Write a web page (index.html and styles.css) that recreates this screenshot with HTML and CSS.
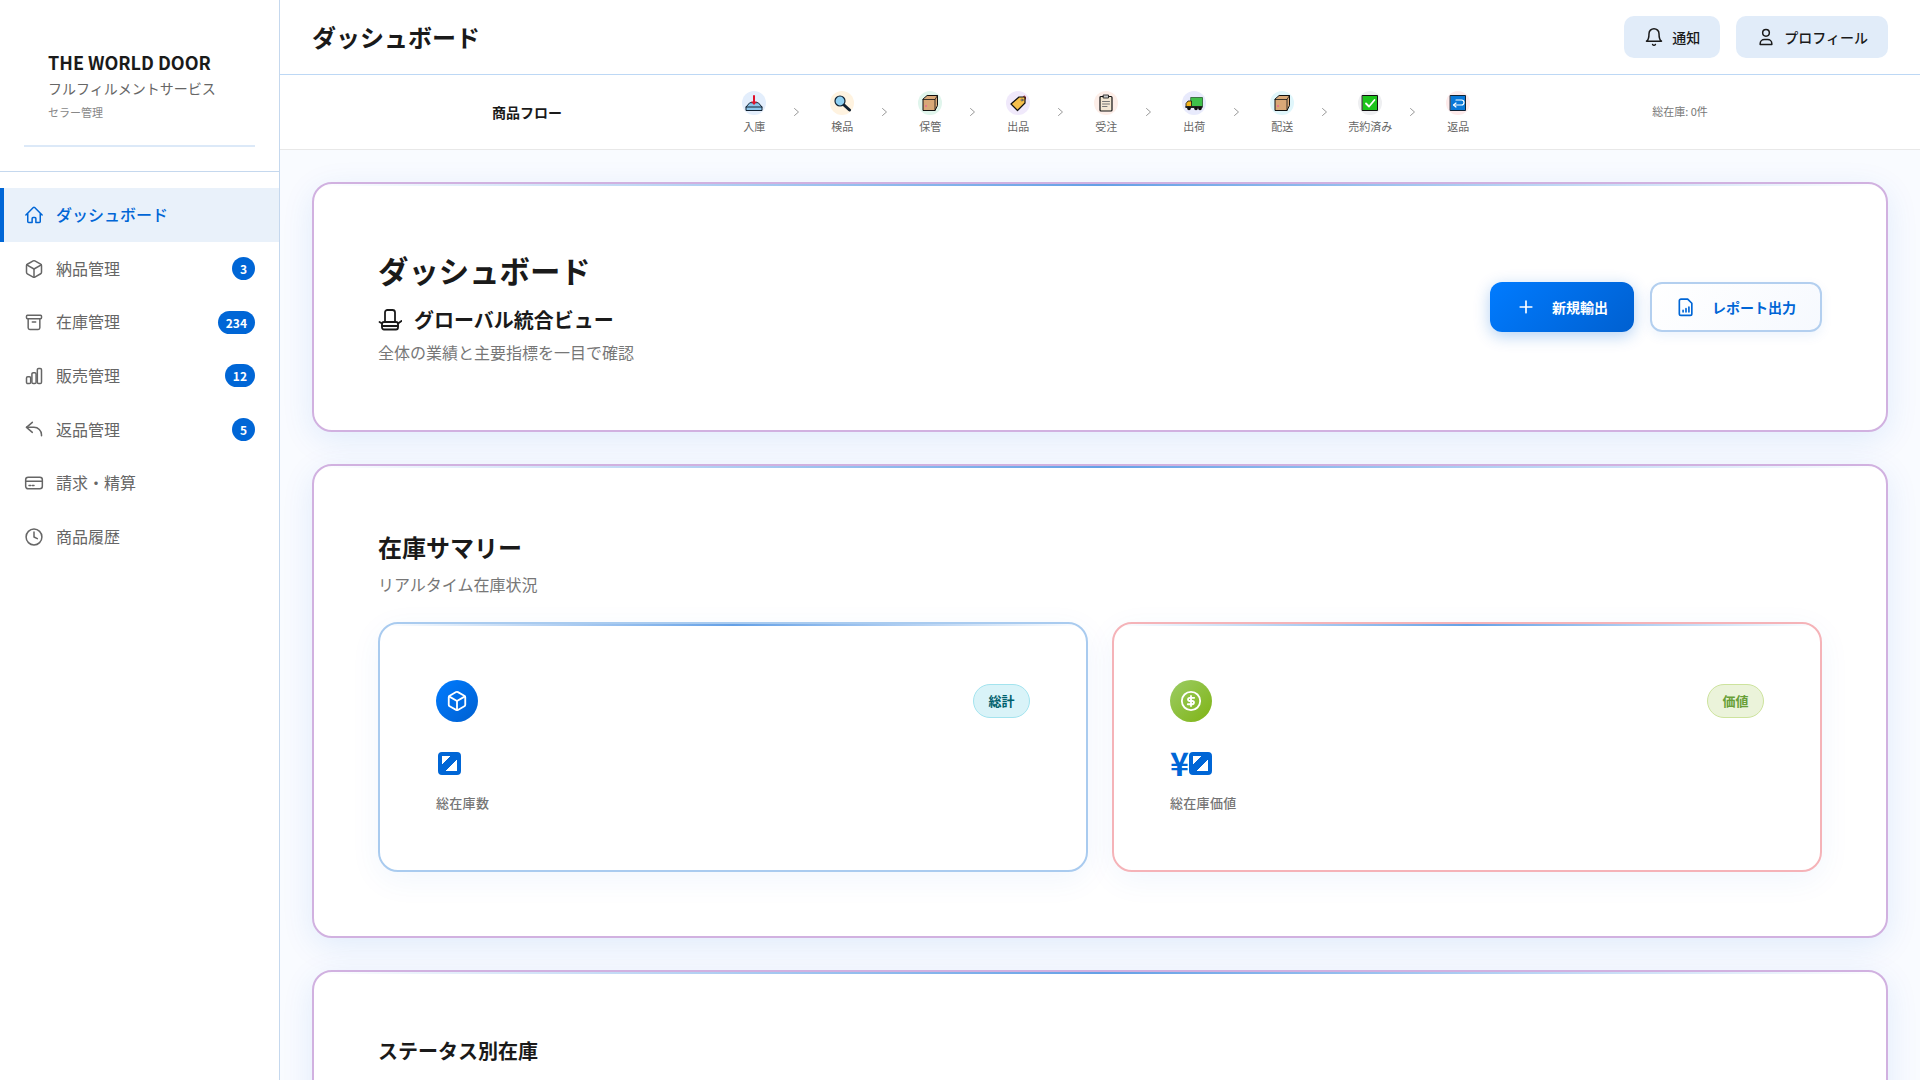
FILE: index.html
```html
<!DOCTYPE html>
<html lang="ja">
<head>
    <meta charset="UTF-8">
    <title>ダッシュボード - THE WORLD DOOR</title>
    <link rel="stylesheet" href="styles.css">
</head>
<body>
    <div class="layout">
        <aside class="sidebar">
            <div class="brand">
                <div class="brand-text">
                    <div class="brand-name">THE WORLD DOOR</div>
                    <div class="brand-sub">フルフィルメントサービス</div>
                    <div class="brand-role">セラー管理</div>
                </div>
            </div>
            <nav class="nav">
                <a class="nav-item active">
                    <svg class="nav-icon" viewBox="0 0 24 24"><path d="M2.25 12l8.954-8.955a1.126 1.126 0 011.591 0L21.75 12M4.5 9.75v10.125c0 .621.504 1.125 1.125 1.125H9.75v-4.875c0-.621.504-1.125 1.125-1.125h2.25c.621 0 1.125.504 1.125 1.125V21h4.125c.621 0 1.125-.504 1.125-1.125V9.75"/></svg>
                    <span class="nav-label">ダッシュボード</span>
                </a>
                <a class="nav-item">
                    <svg class="nav-icon" viewBox="0 0 24 24"><path d="M21 8a2 2 0 0 0-1-1.73l-7-4a2 2 0 0 0-2 0l-7 4A2 2 0 0 0 3 8v8a2 2 0 0 0 1 1.73l7 4a2 2 0 0 0 2 0l7-4A2 2 0 0 0 21 16Z"/><path d="m3.3 7 8.7 5 8.7-5"/><path d="M12 22V12"/></svg>
                    <span class="nav-label">納品管理</span>
                    <span class="nav-badge">3</span>
                </a>
                <a class="nav-item">
                    <svg class="nav-icon" viewBox="0 0 24 24"><rect x="3" y="4" width="18" height="4" rx="1"/><path d="M5 8v11a2 2 0 0 0 2 2h10a2 2 0 0 0 2-2V8"/><path d="M10 12h4"/></svg>
                    <span class="nav-label">在庫管理</span>
                    <span class="nav-badge">234</span>
                </a>
                <a class="nav-item">
                    <svg class="nav-icon" viewBox="0 0 24 24"><rect x="3" y="13" width="5" height="8" rx="1.5"/><rect x="9.5" y="8" width="5" height="13" rx="1.5"/><rect x="16" y="3" width="5" height="18" rx="1.5"/></svg>
                    <span class="nav-label">販売管理</span>
                    <span class="nav-badge">12</span>
                </a>
                <a class="nav-item">
                    <svg class="nav-icon" viewBox="0 0 24 24"><path d="M10 4l-7 6 7 6"/><path d="M3 10h9a9 9 0 0 1 9 9v1"/></svg>
                    <span class="nav-label">返品管理</span>
                    <span class="nav-badge">5</span>
                </a>
                <a class="nav-item">
                    <svg class="nav-icon" viewBox="0 0 24 24"><rect x="2" y="5" width="20" height="14" rx="3"/><path d="M2 10h20"/><path d="M6 15h2M10 15h2"/></svg>
                    <span class="nav-label">請求・精算</span>
                </a>
                <a class="nav-item">
                    <svg class="nav-icon" viewBox="0 0 24 24"><circle cx="12" cy="12" r="9.5"/><path d="M12 6v6l4 2"/></svg>
                    <span class="nav-label">商品履歴</span>
                </a>
            </nav>
        </aside>

        <div class="content">
            <header class="topbar">
                <h1 class="topbar-title">ダッシュボード</h1>
                <div class="topbar-actions">
                    <button class="top-btn">
                        <svg class="top-icon" viewBox="0 0 24 24"><path d="M6 8a6 6 0 0 1 12 0c0 7 3 9 3 9H3s3-2 3-9"/><path d="M10.3 21a1.94 1.94 0 0 0 3.4 0"/></svg>
                        通知
                    </button>
                    <button class="top-btn">
                        <svg class="top-icon" viewBox="0 0 24 24"><circle cx="12" cy="7" r="4"/><path d="M5 20a5 5 0 0 1 5-5h4a5 5 0 0 1 5 5v1H5z"/></svg>
                        プロフィール
                    </button>
                </div>
            </header>

            <div class="flow-bar">
                <div class="flow-title">商品フロー</div>
                <div class="flow-steps">
                    <div class="flow-step">
                        <span class="flow-icon c1"><svg viewBox="0 0 18 18"><path d="M4.500 9 1 13v3.500h16V13l-3.500-4z" fill="#8cc4ea" stroke="#123"/><path d="M1 13h16" stroke="#123"/><path d="M9 2v7" stroke="#e0102a" stroke-width="2"/><path d="M6 7.500 9 11l3-3.500z" fill="#e0102a" stroke="none"/></svg></span>
                        <span class="flow-label">入庫</span>
                    </div>
                    <svg class="flow-arrow" viewBox="0 0 5 8"><path d="M.5.5 4.500 4 .5 7.500"/></svg>
                    <div class="flow-step">
                        <span class="flow-icon c2"><svg viewBox="0 0 18 18"><path d="M11 11l5.500 5" stroke="#123" stroke-width="3"/><circle cx="7" cy="7" r="5" fill="#8fd0f2" stroke="#123" stroke-width="1.200"/></svg></span>
                        <span class="flow-label">検品</span>
                    </div>
                    <svg class="flow-arrow" viewBox="0 0 5 8"><path d="M.5.5 4.500 4 .5 7.500"/></svg>
                    <div class="flow-step">
                        <span class="flow-icon c3"><svg viewBox="0 0 18 18"><path d="M6.500 1.500h10v10L14 16.500H2V5.500z" fill="#d9a877" stroke="#111"/><path d="M2 5.500h12v11M14 5.500l2.500-4" fill="none" stroke="#111" stroke-width=".8"/><path d="M4 11h2v2H4z" fill="#e8788a" stroke="none"/></svg></span>
                        <span class="flow-label">保管</span>
                    </div>
                    <svg class="flow-arrow" viewBox="0 0 5 8"><path d="M.5.5 4.500 4 .5 7.500"/></svg>
                    <div class="flow-step">
                        <span class="flow-icon c4"><svg viewBox="0 0 18 18"><path d="M14 3c1-2 3-1 2.500 2" stroke="#c01828"/><path d="M10 3h6v6l-7.500 7.500L2 10z" fill="#f6c04c" stroke="#111" stroke-width="1.200"/><circle cx="13" cy="6" r="1" fill="#fff" stroke="#111" stroke-width=".6"/></svg></span>
                        <span class="flow-label">出品</span>
                    </div>
                    <svg class="flow-arrow" viewBox="0 0 5 8"><path d="M.5.5 4.500 4 .5 7.500"/></svg>
                    <div class="flow-step">
                        <span class="flow-icon c5"><svg viewBox="0 0 18 18"><rect x="3" y="2.500" width="12" height="14.500" rx="1" fill="#f3e7d3" stroke="#111" stroke-width="1.200"/><rect x="6.500" y="1" width="5" height="3" fill="#c9c9c9" stroke="#111" stroke-width=".8"/><path d="M5.500 7.500h7M5.500 10h7M5.500 12.500h4.500" stroke="#777"/></svg></span>
                        <span class="flow-label">受注</span>
                    </div>
                    <svg class="flow-arrow" viewBox="0 0 5 8"><path d="M.5.5 4.500 4 .5 7.500"/></svg>
                    <div class="flow-step">
                        <span class="flow-icon c6"><svg viewBox="0 0 18 18"><rect x="6" y="3.500" width="11.500" height="9" fill="#3fc04a" stroke="#1a4a1e" stroke-width=".7"/><path d="M1 13V9.500L3 7h3.500v6z" fill="#f2b51e" stroke="#111" stroke-width=".8"/><rect x=".5" y="12" width="17" height="2" fill="#222" stroke="none"/><circle cx="4" cy="14.500" r="1.800" fill="#111" stroke="none"/><circle cx="11" cy="14.500" r="1.800" fill="#111" stroke="none"/><circle cx="15" cy="14.500" r="1.800" fill="#111" stroke="none"/></svg></span>
                        <span class="flow-label">出荷</span>
                    </div>
                    <svg class="flow-arrow" viewBox="0 0 5 8"><path d="M.5.5 4.500 4 .5 7.500"/></svg>
                    <div class="flow-step">
                        <span class="flow-icon c7"><svg viewBox="0 0 18 18"><path d="M6.500 1.500h10v10L14 16.500H2V5.500z" fill="#d9a877" stroke="#111"/><path d="M2 5.500h12v11M14 5.500l2.500-4" fill="none" stroke="#111" stroke-width=".8"/><path d="M4 11h2v2H4z" fill="#e8788a" stroke="none"/></svg></span>
                        <span class="flow-label">配送</span>
                    </div>
                    <svg class="flow-arrow" viewBox="0 0 5 8"><path d="M.5.5 4.500 4 .5 7.500"/></svg>
                    <div class="flow-step">
                        <span class="flow-icon c8"><svg viewBox="0 0 18 18"><rect x="1.500" y="1.500" width="15" height="15" fill="#1cc41c" stroke="#111"/><path d="M5 9.500 8 12.500 13.500 6" stroke="#fff" stroke-width="1.800"/></svg></span>
                        <span class="flow-label">売約済み</span>
                    </div>
                    <svg class="flow-arrow" viewBox="0 0 5 8"><path d="M.5.5 4.500 4 .5 7.500"/></svg>
                    <div class="flow-step">
                        <span class="flow-icon c9"><svg viewBox="0 0 18 18"><rect x="1.500" y="1.500" width="15" height="15" fill="#0a78d8" stroke="#123"/><path d="M7 6h5.500a2.500 2.500 0 0 1 0 5H5" stroke="#fff" stroke-width="1.200"/><path d="M7 9 4.500 11 7 13" stroke="#fff" stroke-width="1.200"/></svg></span>
                        <span class="flow-label">返品</span>
                    </div>
                </div>
                <div class="flow-total">総在庫: 0件</div>
            </div>

            <main class="main">
                <section class="card hero">
                    <div>
                        <h2 class="hero-title">ダッシュボード</h2>
                        <div class="hero-sub">
                            <svg class="hero-icon" viewBox="0 0 24 24"><path d="M7 14V4.500A2.500 2.500 0 0 1 9.500 2h5A2.500 2.500 0 0 1 17 4.500V14"/><rect x="4" y="14" width="16" height="7.500" rx="2"/><path d="M20 15.500l3.500-2.500"/><path d="M4 15.500 1.500 14"/><path d="M4 18h16"/></svg>
                            グローバル統合ビュー
                        </div>
                        <p class="hero-desc">全体の業績と主要指標を一目で確認</p>
                    </div>
                    <div class="hero-actions">
                        <button class="btn btn-primary">
                            <svg class="btn-icon" viewBox="0 0 24 24"><path d="M12 5v14M5 12h14"/></svg>
                            新規輸出
                        </button>
                        <button class="btn btn-outline">
                            <svg class="btn-icon" viewBox="0 0 24 24"><path d="M6 2.500h8l5 5V20a2 2 0 0 1-2 2H6a2 2 0 0 1-2-2V4.500a2 2 0 0 1 2-2z"/><path d="M8.500 18v-2M12 18v-4M15.500 18v-6"/></svg>
                            レポート出力
                        </button>
                    </div>
                </section>

                <section class="card">
                    <h2 class="section-title">在庫サマリー</h2>
                    <p class="section-sub">リアルタイム在庫状況</p>
                    <div class="stat-grid">
                        <div class="stat-card stat-blue">
                            <div class="stat-head">
                                <span class="stat-icon icon-blue">
                                    <svg viewBox="0 0 24 24"><path d="M21 8a2 2 0 0 0-1-1.730l-7-4a2 2 0 0 0-2 0l-7 4A2 2 0 0 0 3 8v8a2 2 0 0 0 1 1.730l7 4a2 2 0 0 0 2 0l7-4A2 2 0 0 0 21 16Z"/><path d="m3.300 7 8.700 5 8.700-5"/><path d="M12 22V12"/></svg>
                                </span>
                                <span class="stat-tag tag-teal">総計</span>
                            </div>
                            <div class="stat-value"><span class="zero-mark"></span></div>
                            <div class="stat-label">総在庫数</div>
                        </div>
                        <div class="stat-card stat-pink">
                            <div class="stat-head">
                                <span class="stat-icon icon-green">
                                    <svg viewBox="0 0 24 24"><circle cx="12" cy="12" r="10"/><path d="M15.500 8.500h-5a1.750 1.750 0 0 0 0 3.500h3a1.750 1.750 0 0 1 0 3.500h-5"/><path d="M12 6.500v11"/></svg>
                                </span>
                                <span class="stat-tag tag-green">価値</span>
                            </div>
                            <div class="stat-value">¥<span class="zero-mark"></span></div>
                            <div class="stat-label">総在庫価値</div>
                        </div>
                    </div>
                </section>

                <section class="card">
                    <h2 class="section-title small">ステータス別在庫</h2>
                </section>
            </main>
        </div>
    </div>
</body>
</html>
```

FILE: styles.css
```css
* {
    box-sizing: border-box;
}
html, body {
    height: 100%;
}
body {
    margin: 0;
    overflow: hidden;
    font-family: "Noto Sans CJK JP", "Noto Sans", sans-serif;
    font-size: 14px;
    line-height: 1.6;
    color: #1a1a1a;
    background: #fff;
}
h1, h2, p {
    margin: 0;
}
svg {
    fill: none;
    stroke: currentColor;
    stroke-width: 2;
    stroke-linecap: round;
    stroke-linejoin: round;
    flex-shrink: 0;
}
.layout {
    display: flex;
    height: 100vh;
}

/* sidebar */
.sidebar {
    width: 280px;
    flex-shrink: 0;
    background: #fff;
    border-right: 1px solid #c5d8ee;
}
.brand {
    padding: 0 24px 24px;
    border-bottom: 1px solid #c5d8ee;
}
.brand-text {
    padding: 47px 24px 24px;
    border-bottom: 2px solid #dce9f8;
}
.brand-name {
    font-size: 18px;
    font-weight: 700;
    line-height: 1.7;
    color: #1a1a1a;
}
.brand-sub {
    font-size: 14px;
    color: #666;
    line-height: 1.5;
}
.brand-role {
    font-size: 11px;
    color: #888;
    line-height: 1.6;
    margin-top: 5px;
}
.nav {
    padding-top: 16px;
}
.nav-item {
    display: flex;
    align-items: center;
    gap: 12px;
    padding: 14px 24px;
    font-size: 16px;
    color: #666;
    border-left: 4px solid transparent;
    padding-left: 20px;
}
.nav-item.active {
    color: #0066d6;
    font-weight: 500;
    background: #e9f1fa;
    border-left-color: #0066d6;
}
.nav-icon {
    width: 20px;
    height: 20px;
    stroke-width: 1.8;
}
.nav-label {
    flex: 1;
}
.nav-badge {
    padding: 0 8px;
    min-width: 23px;
    height: 23px;
    line-height: 23px;
    text-align: center;
    font-size: 12px;
    font-weight: 700;
    color: #fff;
    background: #0066d6;
    border-radius: 12px;
}

/* top */
.content {
    flex: 1;
    min-width: 0;
    display: flex;
    flex-direction: column;
}
.topbar {
    display: flex;
    align-items: center;
    justify-content: space-between;
    height: 75px;
    padding: 0 32px;
    background: #fff;
    border-bottom: 1px solid #bdd8f5;
}
.topbar-title {
    font-size: 24px;
    font-weight: 700;
}
.topbar-actions {
    display: flex;
    gap: 16px;
}
.top-btn {
    display: flex;
    align-items: center;
    gap: 8px;
    padding: 10px 20px;
    font: inherit;
    font-size: 14px;
    font-weight: 500;
    color: #1a1a1a;
    background: #e1ecf9;
    border: none;
    border-radius: 10px;
}
.top-icon {
    width: 20px;
    height: 20px;
    stroke-width: 1.8;
}
.flow-bar {
    display: flex;
    align-items: center;
    justify-content: space-evenly;
    height: 75px;
    padding: 0 32px;
    background: #fff;
    border-bottom: 1px solid #e8e8e8;
}
.flow-title {
    font-size: 14px;
    font-weight: 700;
}
.flow-steps {
    display: flex;
    align-items: center;
    margin: 0 1px 0 -1px;
}
.flow-step {
    width: 26px;
    padding-top: 2px;
    display: flex;
    flex-direction: column;
    align-items: center;
    gap: 3px;
}
.flow-icon {
    width: 24px;
    height: 24px;
    display: flex;
    align-items: center;
    justify-content: center;
    border-radius: 50%;
}
.flow-icon svg {
    width: 18px;
    height: 18px;
    stroke-width: 1;
    color: #111;
}
.c1 { background: #e3eefc; }
.c2 { background: #fff3e0; }
.c3 { background: #e0f5ec; }
.c4 { background: #f0e9fb; }
.c5 { background: #fdeee8; }
.c6 { background: #e8eafc; }
.c7 { background: #e0f6fb; }
.c8 { background: #eeeff1; }
.c9 { background: #fdeaea; }
.flow-label {
    font-size: 11px;
    color: #666;
    white-space: nowrap;
}
.flow-arrow {
    width: 5px;
    height: 8px;
    margin: 0 30px 0 27px;
    color: #999;
    stroke-width: 1;
}
.flow-total {
    font-size: 11px;
    color: #777;
}

/* main area */
.main {
    flex: 1;
    min-height: 0;
    overflow: hidden;
    padding: 32px;
    background: #f9fbff;
}
.card {
    position: relative;
    overflow: hidden;
    padding: 64px;
    margin-bottom: 32px;
    background: #fff;
    border: 2px solid #d1b1e0;
    border-radius: 20px;
    box-shadow: 0 8px 32px rgba(0, 102, 214, 0.1);
}
.card::before {
    content: "";
    position: absolute;
    top: 0;
    left: 0;
    right: 0;
    height: 2px;
    background: linear-gradient(90deg, transparent, #64a0e6, transparent);
}
.hero {
    display: flex;
    align-items: center;
    justify-content: space-between;
}
.hero-title {
    font-size: 30.4px;
    line-height: 44px;
    font-weight: 700;
    margin-bottom: 12px;
}
.hero-sub {
    display: flex;
    align-items: center;
    gap: 12px;
    font-size: 20px;
    font-weight: 700;
    margin-bottom: 4px;
}
.hero-icon {
    width: 24px;
    height: 24px;
    stroke-width: 1.8;
}
.hero-desc {
    font-size: 16px;
    color: #777;
}
.hero-actions {
    display: flex;
    gap: 16px;
}
.btn {
    display: flex;
    align-items: center;
    gap: 16px;
    padding: 12px 24px;
    font: inherit;
    font-size: 14px;
    font-weight: 700;
    border: 2px solid transparent;
    border-radius: 12px;
}
.btn-primary {
    color: #fff;
    background: linear-gradient(135deg, #007bff, #0060d0) border-box;
    box-shadow: 0 4px 16px rgba(0, 102, 214, 0.3);
}
.btn-outline {
    color: #0066d6;
    background: linear-gradient(135deg, #fff, #f6f9fe);
    border-color: #b3cfef;
    box-shadow: 0 4px 12px rgba(0, 102, 214, 0.08);
}
.btn-icon {
    width: 20px;
    height: 20px;
}
.section-title {
    font-size: 24px;
    line-height: 33.6px;
    font-weight: 700;
    margin-bottom: 8.8px;
}
.section-title.small {
    font-size: 20px;
    line-height: 30px;
    margin-bottom: 0;
    padding-bottom: 40px;
}
.section-sub {
    font-size: 16px;
    color: #777;
}
.stat-grid {
    display: grid;
    grid-template-columns: repeat(2, 1fr);
    gap: 24px;
    margin-top: 24px;
}
.stat-card {
    position: relative;
    overflow: hidden;
    padding: 56px 56px 57px;
    background: #fff;
    border: 2px solid #a9cbef;
    border-radius: 20px;
    box-shadow: 0 8px 32px rgba(0, 102, 214, 0.06);
}
.stat-card::before {
    content: "";
    position: absolute;
    top: 0;
    left: 0;
    right: 0;
    height: 2px;
    background: linear-gradient(90deg, transparent, #64a0e6, transparent);
}
.stat-pink {
    border-color: #f5b3b8;
}
.stat-head {
    display: flex;
    align-items: center;
    justify-content: space-between;
    margin-bottom: 16px;
}
.stat-icon {
    width: 42px;
    height: 42px;
    display: flex;
    align-items: center;
    justify-content: center;
    color: #fff;
    border-radius: 50%;
}
.stat-icon svg {
    width: 22px;
    height: 22px;
}
.icon-blue {
    background: linear-gradient(135deg, #007bff, #0060d0);
}
.icon-green {
    background: linear-gradient(135deg, #9ccc65, #7fb414);
}
.stat-tag {
    height: 34px;
    padding: 0 14.5px;
    line-height: 31px;
    font-size: 13px;
    font-weight: 700;
    border: 1px solid;
    border-radius: 17px;
}
.tag-teal {
    color: #00606c;
    background: #d9f3f8;
    border-color: #a3e3ee;
}
.tag-green {
    color: #689f38;
    background: #ebf3da;
    border-color: #cde39d;
}
.stat-value {
    display: flex;
    align-items: center;
    height: 51px;
    font-size: 32px;
    font-weight: 700;
    letter-spacing: -2px;
    color: #0066d6;
}
.zero-mark {
    width: 23px;
    height: 23px;
    margin-left: 2px;
    border-radius: 4px;
    border: 4px solid #0066d6;
    background: linear-gradient(135deg, #fff 30%, #0066d6 30%, #0066d6 62%, #fff 62%);
}
.stat-label {
    margin-top: 4px;
    font-size: 13px;
    font-weight: 500;
    letter-spacing: 0.3px;
    color: #757575;
}
```
